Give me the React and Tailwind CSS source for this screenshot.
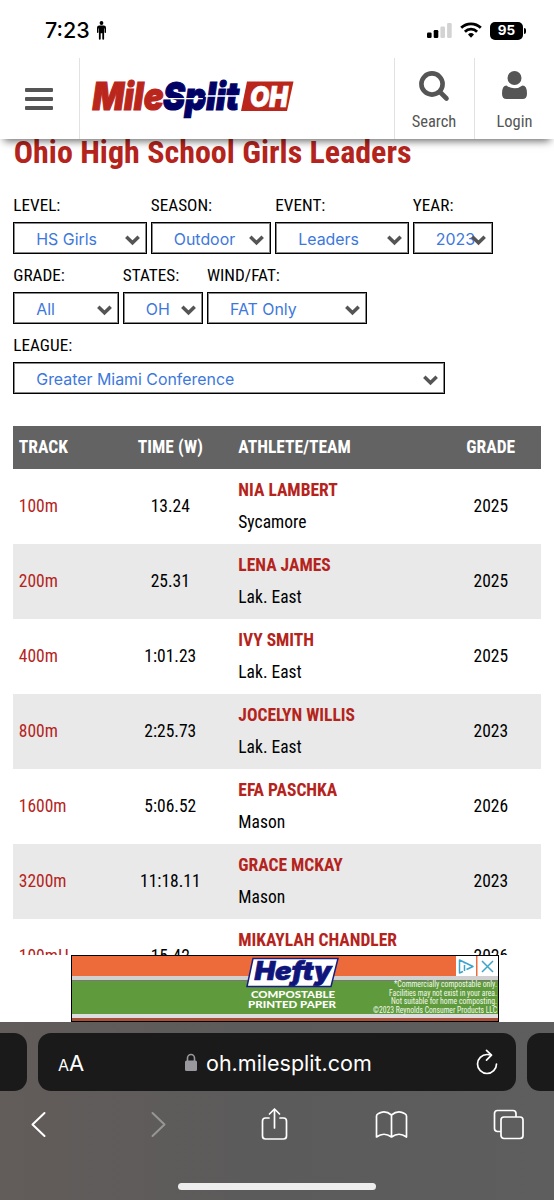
import React from 'react';

const filters = [
  [
    { label: 'LEVEL:', value: 'HS Girls', width: 'w-[133.5px]' },
    { label: 'SEASON:', value: 'Outdoor', width: 'w-[120.5px]' },
    { label: 'EVENT:', value: 'Leaders', width: 'w-[133.5px]' },
    { label: 'YEAR:', value: '2023', width: 'w-[80.5px]' },
  ],
  [
    { label: 'GRADE:', value: 'All', width: 'w-[105.5px]' },
    { label: 'STATES:', value: 'OH', width: 'w-[80.2px]' },
    { label: 'WIND/FAT:', value: 'FAT Only', width: 'w-[160.5px]' },
  ],
  [{ label: 'LEAGUE:', value: 'Greater Miami Conference', width: 'w-[431.5px]' }],
];

const leaders = [
  { track: '100m', time: '13.24', athlete: 'NIA LAMBERT', team: 'Sycamore', grade: '2025' },
  { track: '200m', time: '25.31', athlete: 'LENA JAMES', team: 'Lak. East', grade: '2025' },
  { track: '400m', time: '1:01.23', athlete: 'IVY SMITH', team: 'Lak. East', grade: '2025' },
  { track: '800m', time: '2:25.73', athlete: 'JOCELYN WILLIS', team: 'Lak. East', grade: '2023' },
  { track: '1600m', time: '5:06.52', athlete: 'EFA PASCHKA', team: 'Mason', grade: '2026' },
  { track: '3200m', time: '11:18.11', athlete: 'GRACE MCKAY', team: 'Mason', grade: '2023' },
  { track: '100mH', time: '15.42', athlete: 'MIKAYLAH CHANDLER', team: '', grade: '2026' },
];

const StatusBar = () => (
  <div className="flex h-[58px] items-center justify-between pt-[3px] pr-[28px] pl-[45px] font-['Inter',sans-serif]">
    <div className="flex items-center gap-[7px]">
      <span className="text-[21.5px] font-medium text-black">7:23</span>
      <svg width="9" height="19" viewBox="0 0 9 19" fill="#000">
        <circle cx="4.5" cy="2" r="1.9" />
        <path d="M2.2 4.6h4.6Q9 4.6 9 6.8v4.4q0 .7-.7.7t-.7-.7V7.4h-.5v10.4q0 .9-.9.9t-.9-.9v-5.6h-1.6v5.6q0 .9-.9.9t-.9-.9V7.4h-.5v3.8q0 .7-.7.7T0 11.2V6.8Q0 4.6 2.2 4.6z" />
      </svg>
    </div>
    <div className="flex items-center">
      <svg width="25" height="16" viewBox="0 0 25 16">
        <rect x="0" y="9.5" width="4.6" height="5.5" rx="1.2" />
        <rect x="6.7" y="7" width="4.6" height="8" rx="1.2" />
        <rect x="13.4" y="3.5" width="4.6" height="11.5" rx="1.2" fill="#d3d3d3" />
        <rect x="20.1" y="0" width="4.6" height="15" rx="1.2" fill="#d3d3d3" />
      </svg>
      <svg className="ml-[8px]" width="22" height="17" viewBox="0 0 22 17" fill="none" stroke="#000" strokeWidth="2.8">
        <path d="M1.2 5.8a14 14 0 0 1 19.6 0" />
        <path d="M4.9 9.7a8.7 8.7 0 0 1 12.2 0" />
        <path d="M8 12.5a4.4 4.4 0 0 1 6 0l-3 3.2z" fill="#000" stroke="none" />
      </svg>
      <div className="ml-[8px] flex h-[18px] w-[33px] items-center justify-center rounded-[5px] bg-black text-[13.5px] font-bold text-white">
        95
      </div>
      <div className="ml-px h-[6px] w-[2px] rounded-r-full bg-black" />
    </div>
  </div>
);

const Logo = () => (
  <svg width="204" height="42" viewBox="0 0 204 42" fontFamily="Inter, sans-serif" fontWeight="900" fontStyle="italic">
    <text x="1.500" y="31.500" fontSize="39" fill="#ba261b" stroke="#ba261b" strokeWidth="1.200" textLength="71" lengthAdjust="spacingAndGlyphs">Mile</text>
    <text x="72" y="31.500" fontSize="39" fill="#020266" stroke="#020266" strokeWidth="1.200" textLength="76" lengthAdjust="spacingAndGlyphs">Split</text>
    <path d="M72 20h40l-.3 1.300H72zM114 17.300h34l-.3 1.400h-34z" fill="#fff" />
    <path d="M156 3.500h46.500l-6.500 29.500h-46z" fill="#ba261b" />
    <text x="159" y="28.500" fontSize="29" fill="#fff" stroke="#fff" strokeWidth=".6" textLength="38" lengthAdjust="spacingAndGlyphs">OH</text>
  </svg>
);

const Header = () => (
  <div className="flex h-[81px] text-[#555]">
    <div className="flex w-[80px] items-center border-r border-[#e2e2e2] pl-[25px]">
      <div className="flex flex-col gap-[5px]">
        <div className="h-[4px] w-[28px] rounded-[1px] bg-[#555]" />
        <div className="h-[4px] w-[28px] rounded-[1px] bg-[#555]" />
        <div className="h-[4px] w-[28px] rounded-[1px] bg-[#555]" />
      </div>
    </div>
    <div className="flex-1 pt-[20px] pl-[11px]">
      <Logo />
    </div>
    <div className="flex w-[80px] flex-col items-center border-l border-[#e2e2e2] pt-[12px] pr-px">
      <svg width="32" height="32" viewBox="0 0 32 32" fill="none" stroke="#555">
        <circle cx="14" cy="14" r="10.600" strokeWidth="4.600" />
        <path d="M22 22l6.500 6.500" strokeWidth="4.600" strokeLinecap="round" />
      </svg>
      <span className="mt-[9px] text-[16.500px] leading-[22px]">Search</span>
    </div>
    <div className="flex w-[80px] flex-col items-center border-l border-[#e2e2e2] pt-[12px]">
      <svg width="27" height="32" viewBox="0 0 27 32" fill="#555">
        <path d="M1 23.500Q1 15.500 5.500 15.500Q9 18.300 13.500 18.300T21.500 15.500Q26 15.500 26 23.500Q26 29 21.500 29h-16Q1 29 1 23.500z" />
        <circle cx="13.500" cy="8" r="7" />
      </svg>
      <span className="mt-[9px] text-[16.500px] leading-[22px]">Login</span>
    </div>
  </div>
);

const FilterSelect = ({ label, value, width }) => (
  <div className={width}>
    <div className="h-[26px] text-[17.2px] leading-[18px] whitespace-nowrap text-black">{label}</div>
    <div className="relative flex h-[32px] items-center border border-black bg-white pt-[3px] pl-[22px] shadow-[inset_0_0_0_1px_#888]">
      <span className="font-['Inter',sans-serif] text-[15.900px] whitespace-nowrap text-[#3d78dc]">{value}</span>
      <svg className="absolute top-[12px] right-[6px]" width="15" height="11" viewBox="0 0 15 11" fill="none" stroke="#555" strokeWidth="3.500">
        <path d="M1.300 1.800l6.200 6 6.200-6" />
      </svg>
    </div>
  </div>
);

const LeaderRow = ({ row, striped }) => (
  <div className={`grid h-[75px] grid-cols-[96px_122px_203px_106px] items-center pb-[2px] ${striped ? 'bg-[#e9e9e9]' : 'bg-white'}`}>
    <span className="pt-[2px] pl-[5.5px] text-[#b5241c]">{row.track}</span>
    <span className="pt-[2px] text-center">{row.time}</span>
    <div className="flex h-[64px] flex-col pl-[7px] leading-[32px] whitespace-nowrap">
      <span className="font-bold text-[#b5241c]">{row.athlete}</span>
      <span>{row.team}</span>
    </div>
    <span className="pt-[2px] pl-[7px] text-center">{row.grade}</span>
  </div>
);

const AdBanner = () => (
  <div className="relative ml-[71px] h-[67px] w-[428px] overflow-hidden border border-black bg-[#a94e37]">
    <div className="h-[20px] bg-[#ed6b3b]" />
    <div className="h-[5px] border-b border-[#777] bg-[#d0d0d0]" />
    <div className="h-[33px] bg-[#5f9b3c]" />
    <div className="h-[4px] bg-[#ddd]" />
    <svg className="absolute top-0 left-0" width="426" height="65" viewBox="0 0 426 65">
      <path d="M181 2.500h85l-7 28h-84z" fill="#fff" stroke="#171f83" strokeWidth="1.500" />
      <text x="182.500" y="23.500" fontFamily="Inter, sans-serif" fontWeight="900" fontStyle="italic" fontSize="26" fill="#10157c" stroke="#10157c" strokeWidth=".7" textLength="77" lengthAdjust="spacingAndGlyphs">Hefty</text>
      <g fontFamily="Lato, sans-serif" fontWeight="900" fontSize="9.500" fill="#fff">
        <text x="179" y="42" textLength="84" lengthAdjust="spacingAndGlyphs">COMPOSTABLE</text>
        <text x="176" y="51.500" textLength="88" lengthAdjust="spacingAndGlyphs">PRINTED PAPER</text>
      </g>
      <g fontFamily="'Roboto Condensed', Roboto, sans-serif" fontSize="8.400" fill="#f3f8ef">
        <text x="322" y="31" textLength="103" lengthAdjust="spacingAndGlyphs">*Commercially compostable only.</text>
        <text x="317" y="39.500" textLength="108" lengthAdjust="spacingAndGlyphs">Facilities may not exist in your area.</text>
        <text x="319" y="48" textLength="106" lengthAdjust="spacingAndGlyphs">Not suitable for home composting.</text>
        <text x="301" y="56.500" textLength="124" lengthAdjust="spacingAndGlyphs">©2023 Reynolds Consumer Products LLC</text>
      </g>
    </svg>
    <svg className="absolute top-0 right-0" width="42" height="20" viewBox="0 0 42 20" fill="none" stroke="#3ba5c9" strokeWidth="1.500">
      <path d="M0 0h20v20H0zM21.500 0h20.500v20H21.500z" fill="#fff" stroke="none" />
      <path d="M7 15.500L3.500 17V4L17 10.500 10.500 13.500M8.500 9v6M8.500 5.900v1.500" strokeLinejoin="round" />
      <path d="M26 5l11 11M37 5L26 16" />
    </svg>
  </div>
);

const BrowserBar = () => (
  <div className="h-[178px] overflow-hidden bg-linear-to-r from-[#625c5a] via-[#5b5b5b] to-[#5e5e5e] pt-[11px]">
    <div className="flex gap-[11px]">
      <div className="h-[58px] w-[27px] rounded-r-[13px] bg-[#1a1a1a]" />
      <div className="flex h-[58px] w-[478px] items-center rounded-[13px] bg-[#1a1a1a] pr-[18px] pl-[20px] font-['Inter',sans-serif] text-white">
        <span className="flex w-[127px] items-baseline pt-px leading-none">
          <span className="text-[16px]">A</span>
          <span className="text-[22px]">A</span>
        </span>
        <svg width="12" height="18" viewBox="0 0 12 18" fill="#98989d">
          <rect y="7.500" width="12" height="10.500" rx="1.500" />
          <path d="M2.500 8V5a3.500 3.500 0 0 1 7 0v3" fill="none" stroke="#98989d" strokeWidth="1.600" />
        </svg>
        <span className="ml-[9px] pt-[2px] text-[21.500px]">oh.milesplit.com</span>
        <svg className="ml-auto" width="22" height="27" viewBox="0 0 22 27" fill="none" stroke="#fff" strokeWidth="1.700" strokeLinecap="round" strokeLinejoin="round">
          <path d="M15.500 6.200Q13.500 5.500 11 5.500A9.500 9.500 0 1 0 20.500 15M10.500 1.300l5 4.900-5 4.900" />
        </svg>
      </div>
      <div className="h-[58px] flex-1 rounded-l-[13px] bg-[#1a1a1a]" />
    </div>
    <div className="-ml-5 grid w-[588px] grid-cols-5 justify-items-center pt-[16px]">
      <svg width="15" height="34" viewBox="0 0 15 34" fill="none" stroke="#fff" strokeWidth="2" strokeLinecap="round" strokeLinejoin="round">
        <path d="M13.500 6L1.500 17.500l12 11.500" />
      </svg>
      <svg className="ml-[5px]" width="15" height="34" viewBox="0 0 15 34" fill="none" stroke="#969696" strokeWidth="2" strokeLinecap="round" strokeLinejoin="round">
        <path d="M1.500 6l12 11.500-12 11.500" />
      </svg>
      <svg className="ml-px" width="27" height="34" viewBox="0 0 27 34" fill="none" stroke="#fff" strokeWidth="1.700" strokeLinecap="round" strokeLinejoin="round">
        <path d="M8 11H4.500Q1.500 11 1.500 14v15q0 3 3 3h18q3 0 3-3V14q0-3-3-3H19M13.500 21V2M8.500 7l5-5 5 5" />
      </svg>
      <svg width="33" height="34" viewBox="0 0 33 34" fill="none" stroke="#fff" strokeWidth="1.700" strokeLinejoin="round">
        <path d="M16.500 8Q10 2.500 3.500 6.500Q1.500 7.500 1.500 9v21Q9 24.500 16.500 30Q24 24.500 31.500 30V9q0-1.500-2-2.500Q23 2.500 16.500 8zV30" />
      </svg>
      <svg className="mr-[2px]" width="31" height="34" viewBox="0 0 31 34" fill="none" stroke="#fff" strokeWidth="1.700">
        <path d="M8 24.500H4.500q-3 0-3-3V6.500q0-3 3-3H20q3 0 3 3V10" />
        <rect x="8" y="10" width="22" height="21.500" rx="3" />
      </svg>
    </div>
    <div className="mx-auto mt-[42px] h-[7px] w-[198px] rounded-full bg-[#ededed]" />
  </div>
);

const App = () => (
  <div className="flex h-[1200px] w-[554px] flex-col overflow-hidden bg-white font-['Roboto_Condensed','Roboto',sans-serif] text-black">
    <div className="z-10 h-[139px] shrink-0 bg-white shadow-[0_6px_8px_-4px_rgba(0,0,0,0.6)]">
      <StatusBar />
      <Header />
    </div>
    <div className="h-[816px] shrink-0 overflow-hidden px-[13.3px]">
      <h1 className="h-[57px] pl-[0.5px] text-[32px] leading-[27px] font-bold whitespace-nowrap text-[#b5241c]">Ohio High School Girls Leaders</h1>
      <div className="flex flex-col gap-[12px]">
        {filters.map((group, i) => (
          <div key={i} className="flex gap-[4px]">
            {group.map((f) => (
              <FilterSelect key={f.label} {...f} />
            ))}
          </div>
        ))}
      </div>
      <div className="mt-[32px] w-[527.4px] text-[17.5px]">
        <div className="grid h-[43px] grid-cols-[96px_122px_203px_106px] items-center bg-[#636363] pb-px font-bold text-white">
          <span className="pl-[5.5px]">TRACK</span>
          <span className="text-center">TIME (W)</span>
          <span className="pl-[7px]">ATHLETE/TEAM</span>
          <span className="pl-[7px] text-center">GRADE</span>
        </div>
        {leaders.map((row, i) => (
          <LeaderRow key={row.track} row={row} striped={i % 2 === 1} />
        ))}
      </div>
    </div>
    <AdBanner />
    <BrowserBar />
  </div>
);

export default App;
